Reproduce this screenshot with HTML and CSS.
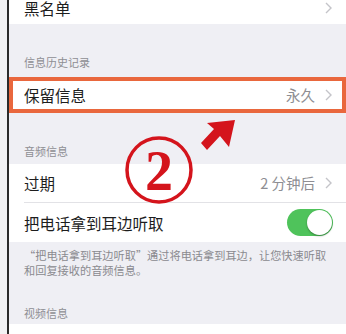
FILE: index.html
```html
<!DOCTYPE html>
<html lang="zh">
<head>
<meta charset="utf-8">
<link rel="stylesheet" href="styles.css">
</head>
<body>
<div class="phone">
  <div class="row row-top">
    <span class="label">黑名单</span>
    <svg class="chev" width="7" height="12" viewBox="0 0 7 12"><polyline points="1,1 6,6 1,11"/></svg>
  </div>
  <div class="section-head gap1">信息历史记录</div>
  <div class="row row-hl">
    <span class="label">保留信息</span>
    <span class="value">永久</span>
    <svg class="chev" width="7" height="12" viewBox="0 0 7 12"><polyline points="1,1 6,6 1,11"/></svg>
  </div>
  <div class="section-head gap2">音频信息</div>
  <div class="group">
    <div class="row row-a">
      <span class="label">过期</span>
      <span class="value">2 分钟后</span>
      <svg class="chev" width="7" height="12" viewBox="0 0 7 12"><polyline points="1,1 6,6 1,11"/></svg>
    </div>
    <div class="row row-b">
      <span class="label">把电话拿到耳边听取</span>
      <span class="toggle"><span class="knob"></span></span>
    </div>
  </div>
  <div class="footnote">“把电话拿到耳边听取”通过将电话拿到耳边，让您快速听取和回复接收的音频信息。</div>
  <div class="section-head gap3">视频信息</div>
  <div class="row row-last"></div>

  <svg class="annot" width="346" height="334" viewBox="0 0 346 334">
    <circle cx="159" cy="170" r="32" fill="none" stroke="#d4141c" stroke-width="3.5"/>
    <text x="159" y="190" text-anchor="middle" class="two">2</text>
    <polygon points="235,120 207,123 214,129 201,143 207,150 220,136 229,147" fill="#d4141c"/>
  </svg>
</div>
</body>
</html>
```
FILE: styles.css
```css
html, body {
  margin: 0;
  padding: 0;
}
body {
  width: 346px;
  height: 334px;
  overflow: hidden;
  background: #f2f2f4;
  font-family: "Noto Sans CJK SC", "Noto Sans", sans-serif;
}
.phone {
  position: relative;
  margin-left: 7px;
  border-left: 2px solid #2b2b2b;
  background: #efeff4;
  height: 334px;
  display: flex;
  flex-direction: column;
}
.phone > * {
  flex-shrink: 0;
}
.row {
  background: #fff;
  display: flex;
  align-items: center;
  padding-left: 15px;
  padding-right: 14px;
  box-sizing: border-box;
}
.label {
  font-size: 15.5px;
  color: #1d1d1d;
  flex: 1;
  line-height: 20px;
}
.value {
  font-size: 14.5px;
  color: #8e8e93;
  margin-right: 10px;
  line-height: 20px;
}
.chev polyline {
  fill: none;
  stroke: #c4c4c9;
  stroke-width: 1.4;
}
.row-top {
  margin-top: -9px;
  height: 33px;
}
.section-head {
  font-size: 11px;
  line-height: 14px;
  color: #8e8e93;
  padding-left: 15px;
}
.gap1 {
  padding-top: 31px;
  padding-bottom: 8px;
}
.row-hl {
  height: 36px;
  border: 4px solid #e9673d;
  padding-left: 11px;
  padding-right: 10px;
}
.gap2 {
  padding-top: 31px;
  padding-bottom: 6px;
}
.group {
  background: #fff;
}
.row-a {
  height: 38px;
}
.row-b {
  height: 40px;
  border-top: 1px solid #e2e2e6;
  margin-left: 15px;
  padding-left: 0;
  padding-right: 13px;
}
.toggle {
  width: 46px;
  height: 27px;
  border-radius: 14px;
  background: #4fc35b;
  display: flex;
  align-items: center;
  justify-content: flex-end;
  padding-right: 1px;
  box-sizing: border-box;
}
.knob {
  width: 25px;
  height: 25px;
  border-radius: 50%;
  background: #fff;
  box-shadow: 0 1px 2px rgba(0,0,0,0.35);
}
.footnote {
  font-size: 11.2px;
  line-height: 15px;
  color: #8a8a8f;
  padding: 6px 14px 0 15px;
}
.gap3 {
  padding-top: 28px;
  padding-bottom: 4px;
}
.row-last {
  height: 20px;
}
.annot {
  position: absolute;
  left: -9px;
  top: 0;
  pointer-events: none;
}
.two {
  font-family: "Liberation Serif", serif;
  font-weight: bold;
  font-size: 56px;
  fill: #d4141c;
}
```
